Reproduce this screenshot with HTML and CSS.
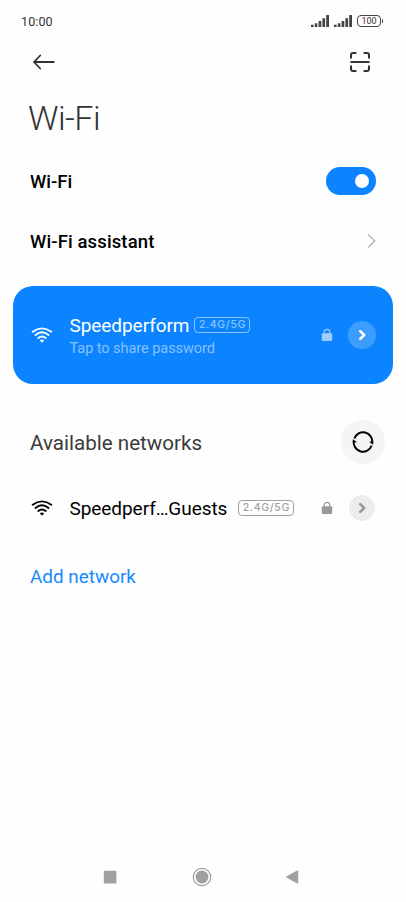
FILE: index.html
```html
<!DOCTYPE html>
<html lang="en">
<head>
<meta charset="utf-8">
<title>Wi-Fi</title>
<link rel="stylesheet" href="styles.css">
</head>
<body>
<svg width="0" height="0" class="defs" aria-hidden="true">
  <symbol id="wifi" viewBox="0 0 22 17">
    <g fill="none" stroke="currentColor" stroke-width="1.9" stroke-linecap="round">
      <path d="M1.7 4.7Q11-2 20.3 4.7"/>
      <path d="M4.5 7.9Q11 2.8 17.5 7.9"/>
      <path d="M7.3 10.9Q11 8 14.7 10.9"/>
    </g>
    <path d="M8.8 13.3Q11 11.6 13.2 13.3L11 15.7Z" fill="currentColor"/>
  </symbol>
  <symbol id="lock" viewBox="0 0 12 14">
    <rect x=".8" y="5.3" width="10.4" height="7.7" rx="1" fill="currentColor"/>
    <path d="M3.2 5.6V4.2a2.8 2.8 0 0 1 5.6 0v1.4" fill="none" stroke="currentColor" stroke-width="1.2"/>
  </symbol>
  <symbol id="signal" viewBox="0 0 18 12">
    <path d="M0 9.8h2.6V12H0zM3.8 8.2h2.6V12H3.8zM7.6 5.9h2.7V12H7.6zM11.4 3.2h2.7V12h-2.7zM15.2 0H18v12h-2.8z" fill="#444"/>
  </symbol>
  <symbol id="go" viewBox="0 0 10 12">
    <path d="M3.2 2.2 7.2 6 3.2 9.8" fill="none" stroke="currentColor" stroke-width="2.5" stroke-linecap="round" stroke-linejoin="round"/>
  </symbol>
</svg>
<header class="status">
  <span class="time">10:00</span>
  <div class="indicators">
    <svg width="18" height="12"><use href="#signal"/></svg>
    <svg width="18" height="12"><use href="#signal"/></svg>
    <span class="battery">100</span>
  </div>
</header>
<div class="toolbar">
  <svg width="24" height="18" viewBox="0 0 24 18" fill="none" stroke="#333" stroke-width="1.8" stroke-linecap="round" stroke-linejoin="round"><path d="M21.8 9H2M8.2 2.5 2 9l6.2 6.5"/></svg>
  <svg width="22" height="22" viewBox="0 0 22 22" fill="none" stroke="#333" stroke-width="2"><path d="M2 7.4V4q0-2 2-2h3.4M14.6 2H18q2 0 2 2v3.4M2 14.6V18q0 2 2 2h3.4M14.6 20H18q2 0 2-2v-3.4M1.5 11h19"/></svg>
</div>
<h1>Wi-Fi</h1>
<main>
  <div class="row">
    <span class="setting">Wi-Fi</span>
    <span class="toggle"></span>
  </div>
  <div class="row">
    <span class="setting assistant">Wi-Fi assistant</span>
    <svg width="10" height="16" viewBox="0 0 10 16" fill="none" stroke="#aaa" stroke-width="1.2"><path d="M1.8 1.4 8.8 8l-7 6.6"/></svg>
  </div>
  <section class="network connected">
    <svg class="wifi" width="22" height="17"><use href="#wifi"/></svg>
    <div class="info">
      <div class="line"><span class="name">Speedperform</span><span class="band">2.4G/5G</span></div>
      <div class="hint">Tap to share password</div>
    </div>
    <svg class="lock" width="12" height="14"><use href="#lock"/></svg>
    <span class="detail"><svg width="10" height="12"><use href="#go"/></svg></span>
  </section>
  <div class="row available">
    <h2>Available networks</h2>
    <span class="refresh"><svg width="22" height="22" viewBox="0 0 22 22" fill="none" stroke="#000" stroke-width="2"><path d="M2.4 7.5A9.2 9.2 0 0 1 20.2 11.8M19.6 14.5A9.2 9.2 0 0 1 1.8 10.2"/><path d="M16.8 10.8h4.4v3L16.8 10.8ZM5.2 11.2H.8v-3L5.2 11.2Z" fill="#000" stroke="none"/></svg></span>
  </div>
  <section class="network guest">
    <svg class="wifi" width="22" height="17"><use href="#wifi"/></svg>
    <div class="info line"><span class="name">Speedperf…Guests</span><span class="band">2.4G/5G</span></div>
    <svg class="lock" width="12" height="14"><use href="#lock"/></svg>
    <span class="detail"><svg width="10" height="12"><use href="#go"/></svg></span>
  </section>
  <div class="add">Add network</div>
</main>
<nav>
  <svg width="20" height="20" viewBox="0 0 20 20"><rect x="3.8" y="3.8" width="12.6" height="12.8" rx=".8" fill="#a0a0a0"/></svg>
  <svg width="20" height="20" viewBox="0 0 20 20"><circle cx="10" cy="10" r="8.7" fill="none" stroke="#a0a0a0" stroke-width="1.2"/><circle cx="10" cy="10" r="6.4" fill="#a0a0a0"/></svg>
  <svg width="20" height="20" viewBox="0 0 20 20"><path d="M4.2 10 15.8 3.6v12.8Z" fill="#a0a0a0" stroke="#a0a0a0" stroke-width=".8" stroke-linejoin="round"/></svg>
</nav>
</body>
</html>
```
FILE: styles.css
```css
* { box-sizing: border-box; }
body {
  margin: 0;
  height: 902px;
  display: flex;
  flex-direction: column;
  background: #fefefe;
  color: #000;
  font-family: Roboto, sans-serif;
  overflow: hidden;
}
svg { display: block; flex: none; }
.defs { height: 0; }
.status {
  height: 42px;
  padding: 0 25px 0 21px;
  display: flex;
  align-items: center;
  justify-content: space-between;
}
.time { font-size: 12.5px; letter-spacing: .1px; color: #333; }
.indicators { display: flex; align-items: center; gap: 5px; }
.battery {
  position: relative;
  width: 24px;
  height: 12px;
  border: 1.5px solid #444;
  border-radius: 4px;
  font-size: 9px;
  line-height: 10px;
  text-align: center;
  color: #333;
}
.battery::after {
  content: "";
  position: absolute;
  right: -3px;
  top: 3px;
  width: 1.5px;
  height: 4px;
  border-radius: 1px;
  background: #444;
}
.toolbar {
  height: 40px;
  padding: 0 35px 0 32px;
  display: flex;
  align-items: center;
  justify-content: space-between;
}
h1 {
  margin: 0;
  height: 69px;
  padding-left: 28px;
  font-size: 34px;
  font-weight: 300;
  line-height: 72px;
  letter-spacing: -.5px;
  color: #333;
}
.row {
  height: 60px;
  padding: 0 30px;
  display: flex;
  align-items: center;
  justify-content: space-between;
}
.setting { font-size: 18.5px; font-weight: 500; padding-top: 2px; }
.assistant { letter-spacing: .12px; }
.toggle {
  width: 50.5px;
  height: 28px;
  padding: 7px;
  border-radius: 14px;
  background: #0d84ff;
  display: flex;
  justify-content: flex-end;
}
.toggle::before {
  content: "";
  width: 14px;
  height: 14px;
  border-radius: 50%;
  background: #fff;
}
.network { display: flex; align-items: center; }
.connected {
  height: 98px;
  margin: 15px 13px 0;
  padding: 0 17px 0 18px;
  border-radius: 20px;
  background: #0d84ff;
  color: #fff;
}
.info { flex: 1; margin-left: 16.5px; }
.connected .info { padding-top: 3px; }
.line { display: flex; align-items: center; gap: 5px; }
.name { font-size: 19px; line-height: 24px; letter-spacing: -.06px; white-space: nowrap; }
.band {
  width: 56px;
  height: 16px;
  border: 1px solid currentColor;
  border-radius: 4px;
  font: 500 10.5px/14px Inter, sans-serif;
  letter-spacing: .65px;
  text-align: center;
  color: #8ac4ff;
}
.connected .band { margin-top: -2px; }
.hint { font-size: 14.5px; line-height: 21px; letter-spacing: -.05px; color: #86c1ff; }
.lock { color: #9ecdff; margin-right: 15px; }
.detail {
  width: 28px;
  height: 28px;
  border-radius: 50%;
  background: #3d9dff;
  display: flex;
  align-items: center;
  justify-content: center;
}
.available { height: 44px; margin-top: 36px; padding-right: 21px; }
h2 { margin: 0; padding-top: 2px; font-size: 20.6px; font-weight: 400; color: #3b3b3b; }
.refresh {
  width: 44px;
  height: 44px;
  border-radius: 50%;
  background: #f5f5f5;
  display: flex;
  align-items: center;
  justify-content: center;
}
.guest { height: 44px; margin-top: 22px; padding: 0 31px; }
.guest .line { gap: 11px; }
.guest .name { padding-top: 2px; }
.guest .band { color: #a0a0a0; }
.guest .lock { color: #999; margin-right: 16px; }
.guest .detail { width: 26px; height: 26px; background: #ececec; color: #999; }
.add { margin-top: 34px; padding-left: 30px; font-size: 18.9px; line-height: 26px; color: #188aff; }
nav {
  margin-top: auto;
  height: 51px;
  padding: 0 104px 0 100px;
  display: flex;
  align-items: center;
  justify-content: space-between;
}
nav svg:nth-child(2) { margin-left: 2px; }
```
